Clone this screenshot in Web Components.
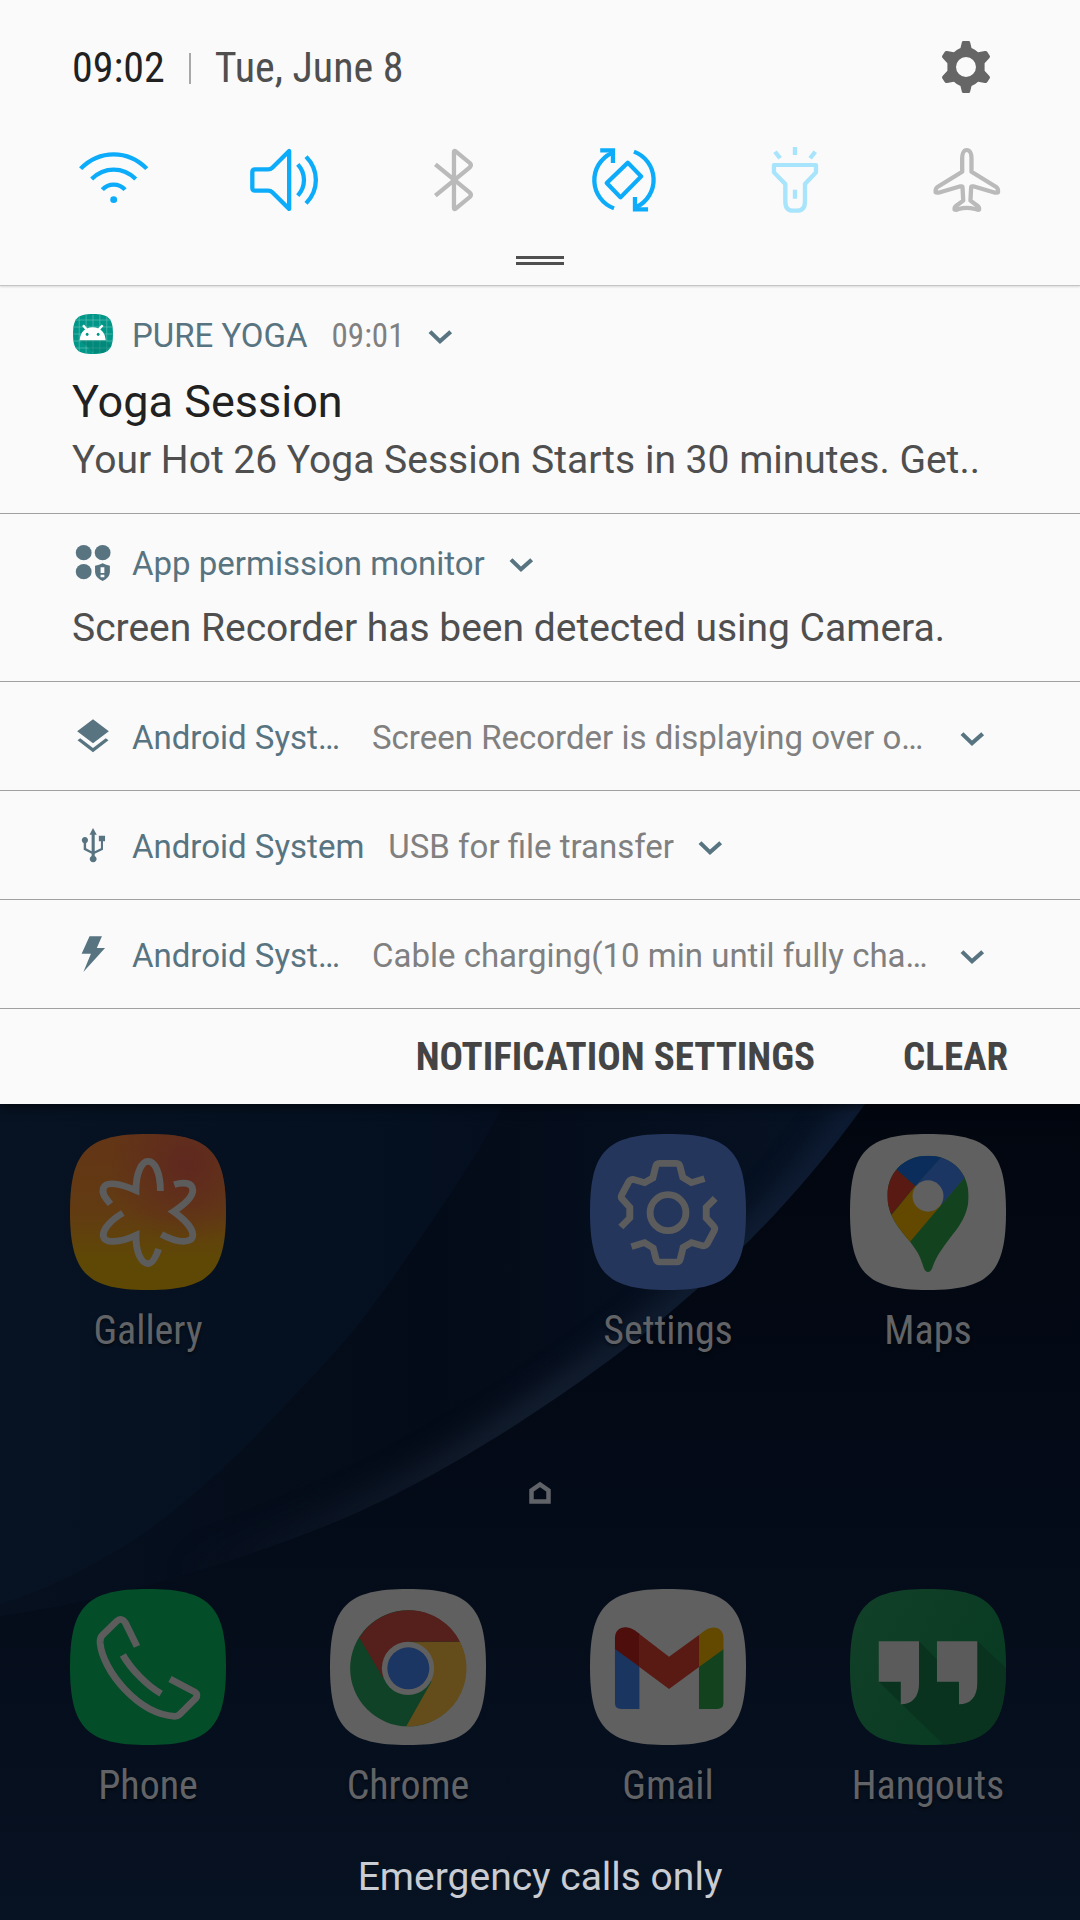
<!DOCTYPE html>
<html lang="en">
<head>
<meta charset="utf-8">
<meta name="viewport" content="width=device-width, initial-scale=1">
<title>Notification shade</title>
<style>
  html, body { margin: 0; min-height: 100vh; background: #050d1b; }
  body {
    display: flex; flex-direction: column;
    font-family: Roboto, "Noto Sans", sans-serif;
    --condensed: "Roboto Condensed", "Liberation Sans Narrow", Roboto, sans-serif;
    --accent: #587481;
  }
</style>
</head>
<body>
<notification-shade>
  <quick-panel slot="panel" time="09:02" date="Tue, June 8">
    <quick-toggle icon="wifi" label="Wi-Fi" state="on"></quick-toggle>
    <quick-toggle icon="sound" label="Sound" state="on"></quick-toggle>
    <quick-toggle icon="bluetooth" label="Bluetooth" state="off"></quick-toggle>
    <quick-toggle icon="rotate" label="Auto rotate" state="on"></quick-toggle>
    <quick-toggle icon="torch" label="Flashlight" state="dim"></quick-toggle>
    <quick-toggle icon="plane" label="Airplane mode" state="off"></quick-toggle>
  </quick-panel>
  <notification-item icon="yoga">
    <span slot="app">PURE YOGA</span>
    <time slot="time">09:01</time>
    <span slot="title">Yoga Session</span>
    <span slot="body">Your Hot 26 Yoga Session Starts in 30 minutes. Get..</span>
  </notification-item>
  <notification-item icon="permission">
    <span slot="app">App permission monitor</span>
    <span slot="body">Screen Recorder has been detected using Camera.</span>
  </notification-item>
  <notification-item compact full icon="layers">
    <span slot="app">Android Syst…</span>
    <span slot="summary">Screen Recorder is displaying over o…</span>
  </notification-item>
  <notification-item compact icon="usb">
    <span slot="app">Android System</span>
    <span slot="summary">USB for file transfer</span>
  </notification-item>
  <notification-item compact full icon="bolt">
    <span slot="app">Android Syst…</span>
    <span slot="summary">Cable charging(10 min until fully cha…</span>
  </notification-item>
  <shade-action slot="actions">NOTIFICATION SETTINGS</shade-action>
  <shade-action slot="actions">CLEAR</shade-action>
</notification-shade>
<home-screen>
  <app-tile icon="gallery" column="1">Gallery</app-tile>
  <app-tile icon="settings" column="3">Settings</app-tile>
  <app-tile icon="maps" column="4">Maps</app-tile>
  <app-tile slot="dock" icon="phone">Phone</app-tile>
  <app-tile slot="dock" icon="chrome">Chrome</app-tile>
  <app-tile slot="dock" icon="gmail">Gmail</app-tile>
  <app-tile slot="dock" icon="hangouts">Hangouts</app-tile>
  <span slot="carrier">Emergency calls only</span>
</home-screen>

<script>
const SQUIRCLE = 'M0-78C61-78 78-61 78 0S61 78 0 78-78 61-78 0-61-78 0-78Z';

/* Each glyph is drawn on a fine grid whose middle is (cx, cy). */
function glyph(size, cx, cy, body, attrs = '', under = '') {
  const h = size / 2;
  return `<svg viewBox="${-h} ${-h} ${size} ${size}" width="${size}" height="${size}" aria-hidden="true">${under}<g transform="scale(.3444 .3333) translate(${-cx} ${-cy})" ${attrs}>${body}</g></svg>`;
}
const LINE = 'fill="none" stroke="currentColor" stroke-width="12.5" stroke-linejoin="round"';
const SOFT = 'fill="none" stroke="#5c5c5c" stroke-width="20"';
const plate = fill => `<path d="${SQUIRCLE}" fill="${fill}"/>`;

const ICONS = {
  wifi: glyph(72, 329, 540, `<path d="M235 506C262 478 296 463 331 463S400 478 427 506M267 537C285 519 307 509 331 509S377 519 395 537M298 569C307 559 318 554 331 554S355 559 364 569"/><circle cx="331" cy="599" r="10" fill="currentColor" stroke="none"/>`, LINE),
  sound: glyph(72, 824, 540, `<path d="M839 453V627L790 577Q785 572 778 572H740Q732 572 732 564V516Q732 508 740 508H778Q785 508 790 503ZM864 493C888 520 888 560 864 587M888 470C926 510 926 570 888 610"/>`, LINE),
  bluetooth: glyph(72, 1321, 540, `<path d="M1264 587L1364 502Q1370 495 1364 489L1323 454Q1318 450 1318 456V624Q1318 630 1323 626L1364 591Q1370 585 1364 578L1264 493"/>`, LINE),
  rotate: glyph(72, 247, 540, `<path d="M215 625A87 90 0 0 1 208 459M273 455A87 90 0 0 1 280 621"/><path d="M175 451H212V489M314 628H276V591" stroke-linejoin="miter"/><path d="M255 488L294 529 234 592 194 549Z"/>`, LINE),
  torch: glyph(72, 743, 540, `<path d="M679 495H801V517L769 552V605Q769 632 745 632H735Q712 632 712 605V552L679 517ZM740 441V465M682 455L697 475M799 455L784 475M740 569V596"/>`, LINE),
  plane: glyph(72, 1239, 540, `<path d="M1238 450C1228 450 1225 465 1225 475V515L1152 562Q1147 566 1148 577 1150 579 1156 578L1220 559Q1226 558 1226 562L1228 602 1207 618Q1202 622 1203 629 1208 631 1215 627 1238 620 1262 627 1270 631 1274 629 1275 622 1270 618L1249 602 1251 562Q1251 558 1257 559L1321 578Q1328 579 1329 577 1330 566 1325 562L1252 515V475C1252 465 1249 450 1238 450Z"/>`, LINE),
  gear: glyph(56, 1237, 201, `<path fill-rule="evenodd" d="M1229 120H1245Q1248 120 1249 124L1253 141Q1263 145 1272 154L1292 150Q1297 149 1299 153L1306 164Q1308 167 1305 171L1291 187V209L1305 225Q1308 229 1306 232L1299 243Q1297 247 1292 246L1272 242Q1263 251 1253 255L1249 272Q1248 276 1245 276H1229Q1226 276 1225 272L1221 255Q1211 251 1202 242L1182 246Q1177 247 1175 243L1168 232Q1166 229 1169 225L1183 209V187L1169 171Q1166 167 1168 164L1175 153Q1177 149 1182 150L1202 154Q1211 145 1221 141L1225 124Q1226 120 1229 120ZM1208 198A29 30 0 1 0 1266 198 29 30 0 1 0 1208 198Z"/>`, 'fill="#666"'),
  chevron: glyph(40, 1277, 136, `<path d="M1248 123L1277 152 1308 123"/>`, 'fill="none" stroke="currentColor" stroke-width="12"'),

  yoga: glyph(42, 270, 135, `<path transform="translate(270 129) scale(.743 .768)" d="${SQUIRCLE}" fill="#009688"/><g stroke="#5fbfb2" stroke-width="2"><path d="M230 76V182M250 71V187M270 71V187M290 71V187M310 76V182M220 87H320M214 108H326M213 129H327M214 150H326M220 171H320"/></g><path d="M232 148H306L324 164 300 186H272Z" fill="#00796b" opacity=".5"/><path d="M251 115L241 103M287 115L298 103" stroke="#fff" stroke-width="7" fill="none"/><path d="M231 148Q235 110 269 109 303 110 307 148Z" fill="#fff"/><ellipse cx="253" cy="130" rx="4" ry="5" fill="#009688"/><ellipse cx="285" cy="130" rx="4" ry="5" fill="#009688"/>`),
  permission: glyph(42, 270, 821, `<circle cx="243" cy="787" r="23"/><circle cx="298" cy="787" r="23"/><circle cx="243" cy="844" r="23"/><path fill-rule="evenodd" d="M276 826Q288 825 298 819 308 825 319 826V846Q318 863 298 872 277 863 276 846ZM292 831V848H303V831ZM292 853V861H303V853Z"/>`, 'fill="currentColor"'),
  layers: glyph(42, 270, 172, `<path d="M270 116L316 152 270 188 224 152ZM225 179L233 173 270 202 307 173 315 179 270 215Z"/>`, 'fill="currentColor"'),
  usb: glyph(42, 270, 501, `<path d="M270 444L281 464H275V514L293 505V484H287V467H305V484H299V509L275 521V528A10 10 0 1 1 266 528V521L243 509V490A9 10 0 1 1 250 490V505L266 514V464H260Z"/>`, 'fill="currentColor"'),
  bolt: glyph(42, 270, 827, `<path d="M260 768H296L281 803H305L242 875 264 820H237Z"/>`, 'fill="currentColor"'),
  home: `<svg viewBox="0 0 24 24" width="24" height="24" aria-hidden="true"><path d="M3.500 20.500V9.500L12 3.500 20.500 9.500V20.500Z" fill="none" stroke="#606368" stroke-width="4.500"/></svg>`,

  gallery: glyph(156, 430, 333, `<path d="M321 309C304 288 295 276 301 260 309 239 352 249 395 268 395 215 412 181 430 181 450 181 466 215 466 270M506 251C530 243 560 243 560 268 560 285 540 308 504 332 540 358 560 385 560 402 560 428 518 428 469 400M461 444C452 470 442 488 430 488 412 488 394 455 395 403 350 425 300 430 300 402 300 385 320 358 357 336"/>`, SOFT, `<defs><linearGradient id="g1" x1="0" y1="0" x2="0" y2="1"><stop offset="0" stop-color="#633516"/><stop offset=".5" stop-color="#623b12"/><stop offset=".8" stop-color="#5f4806"/><stop offset="1" stop-color="#5e4804"/></linearGradient><radialGradient id="g2" cx=".75" cy=".2" r=".5"><stop offset="0" stop-color="#5f2820"/><stop offset="1" stop-color="#5f2820" stop-opacity="0"/></radialGradient></defs>` + plate('url(#g1)') + plate('url(#g2)')),
  settings: glyph(156, 372, 334, `<ellipse cx="372" cy="336" rx="52" ry="54"/><path d="M478 234L440 246 415 230 407 198Q405 188 396 188H347Q338 188 336 198L328 232 304 246 270 236Q263 236 258 243L238 282Q234 290 240 296L261 320V352L235 379M266 438L304 426 329 442 337 474Q339 484 348 484H397Q406 484 408 474L416 440 440 426 474 436Q481 436 486 429L506 390Q510 382 504 376L483 352V320L509 293"/>`, SOFT, plate('#25365d')),
  maps: glyph(156, 1127, 334, `<defs><clipPath id="pin"><path d="M1127 165C1200 165 1245 220 1245 285 1245 345 1215 380 1185 420 1160 455 1150 470 1139 503Q1135 514 1127 514T1115 503C1104 465 1098 455 1075 423 1045 385 1009 345 1009 285 1009 220 1054 165 1127 165Z"/></clipPath></defs><g clip-path="url(#pin)"><path fill="#13421f" d="M1000 150H1260V530H1000Z"/><path fill="#634900" d="M1270 186L1075 423 960 420 1090 255Z"/><path fill="#1c3663" d="M1240 150V223L1165 314 1090 255 1180 152Z"/><path fill="#5a1a14" d="M1020 193L1090 255 1012 353 990 340V200Z"/><path fill="#0a2d5c" d="M1025 197L1090 255 1182 150H1040Z"/></g><ellipse cx="1127" cy="286" rx="45" ry="47" fill="#606060"/>`, '', plate('#606060')),
  phone: glyph(156, 430, 320, `<path d="M398 258L365 189Q355 170 340 182L297 225Q290 232 291 248C298 330 400 460 508 468Q516 468 522 462L568 415Q577 403 566 395L494 356M357 284C380 325 425 375 468 400"/>`, SOFT, plate('#034d29')),
  chrome: glyph(156, 1184, 320, `<ellipse cx="1184" cy="324" rx="168" ry="174" fill="#0f4226"/><path d="M1184 246L1335 244A168 174 0 0 1 1179 498L1252 364Z" fill="#654d1b"/><path d="M1043 232A168 174 0 0 1 1335 244H1184L1110 350Z" fill="#551f1b"/><ellipse cx="1184" cy="324" rx="76" ry="80" fill="#606060"/><ellipse cx="1185" cy="324" rx="61" ry="63" fill="#1c3663"/>`, '', plate('#606060')),
  gmail: glyph(156, 372, 320, `<path fill="#1b3561" d="M218 264L289 318V446H236Q218 446 218 428Z"/><path fill="#13421f" d="M462 318L533 265V428Q533 446 515 446H462Z"/><path fill="#4d0e0c" d="M218 266V233C218 200 250 192 275 210L290 221V320Z"/><path fill="#5a1a14" d="M289 221L375 289 462 224V320L375 386 289 320Z"/><path fill="#634900" d="M462 224L480 210C505 192 533 203 533 233V267L462 320Z"/>`, '', plate('#606060')),
  hangouts: glyph(156, 1127, 320, `<defs><clipPath id="hp"><path transform="translate(1127 320) scale(2.904 3)" d="${SQUIRCLE}"/></clipPath></defs><path clip-path="url(#hp)" fill="#09331f" d="M984 364L1180 560H1360V330L1271 243V364H1153V298L1101 243V364Z"/><path fill="#5b5b5b" d="M984 243H1101V370C1101 410 1080 432 1048 432V364H984ZM1153 243H1270V370C1270 410 1249 432 1217 432V364H1153Z"/>`, '', `<defs><linearGradient id="hg" x1="0" y1="0" x2="1" y2=".6"><stop offset="0" stop-color="#124028"/><stop offset="1" stop-color="#083b22"/></linearGradient></defs>` + plate('url(#hg)')),
};

function define(name, html, ready) {
  const template = document.createElement('template');
  template.innerHTML = html;
  customElements.define(name, class extends HTMLElement {
    connectedCallback() {
      if (this.shadowRoot) return;
      const root = this.attachShadow({ mode: 'open' });
      root.append(template.content.cloneNode(true));
      if (ready) ready(this, root);
    }
  });
}

define('ui-icon', `
  <style>:host { display: block; flex: none; } svg { display: block; overflow: visible; }</style>
  <span></span>`, (host, root) => {
  root.querySelector('span').innerHTML = ICONS[host.getAttribute('name')] || '';
});

define('quick-toggle', `
  <style>
    :host { display: flex; justify-content: center; color: #bababa; }
    :host([state="on"]) { color: #0cacfb; }
    :host([state="dim"]) { color: #a8e4fb; }
    button { all: unset; display: block; cursor: pointer; }
  </style>
  <button type="button"></button>`, (host, root) => {
  const b = root.querySelector('button');
  b.setAttribute('aria-label', host.getAttribute('label'));
  b.innerHTML = `<ui-icon name="${host.getAttribute('icon')}"></ui-icon>`;
});

define('quick-panel', `
  <style>
    :host { display: flex; flex-direction: column; padding-top: 40px; border-bottom: 1px solid #c4c4c4; box-shadow: 0 1px 2px #0002; }
    header { display: flex; align-items: center; height: 56px; padding: 0 86px 0 72px; font-family: var(--condensed); font-size: 42px; line-height: 56px; }
    .time { color: #212121; }
    .rule { width: 2px; height: 31px; margin: 0 24px; background: #a8a8a8; }
    .date { flex: 1; color: #4f4f4f; }
    button { all: unset; cursor: pointer; }
    .toggles { display: grid; grid-template-columns: repeat(6, 1fr); padding: 48px 28px 40px; }
    .handle { align-self: center; width: 48px; height: 3px; border: solid #4f4f4f; border-width: 3px 0; margin-bottom: 20px; }
  </style>
  <header>
    <time class="time"></time><span class="rule"></span><span class="date"></span>
    <button type="button" aria-label="Settings"><ui-icon name="gear"></ui-icon></button>
  </header>
  <div class="toggles"><slot></slot></div>
  <div class="handle"></div>`, (host, root) => {
  root.querySelector('.time').textContent = host.getAttribute('time');
  root.querySelector('.date').textContent = host.getAttribute('date');
});

define('notification-item', `
  <style>
    :host { display: block; padding: 26px 72px 25px; border-bottom: 1px solid #a0a0a0; }
    :host([compact]) { padding: 32px 88px 28px 72px; }
    .head { display: flex; align-items: center; height: 48px; font-size: 33px; line-height: 48px; color: var(--accent); white-space: nowrap; }
    ui-icon { margin-right: 18px; }
    :host([full]) .app { min-width: 216px; }
    :host([full]) .summary { flex: 1; }
    .time, .summary { color: #808080; }
    .time { font-family: var(--condensed); }
    ::slotted([slot="time"]), ::slotted([slot="summary"]) { margin-left: 24px; }
    button { all: unset; cursor: pointer; margin-left: 16px; }
    button ui-icon { margin: 0; }
    .text { display: flex; flex-direction: column; margin-top: 12px; white-space: nowrap; }
    :host([compact]) .text { display: none; }
    ::slotted([slot="title"]) { font-size: 45px; line-height: 60px; color: #212121; }
    ::slotted([slot="body"]) { font-size: 39px; line-height: 56px; color: #4f4f4f; }
  </style>
  <div class="head">
    <ui-icon class="icon"></ui-icon>
    <span class="app"><slot name="app"></slot></span>
    <span class="time"><slot name="time"></slot></span>
    <span class="summary"><slot name="summary"></slot></span>
    <button type="button" aria-label="Expand"><ui-icon name="chevron"></ui-icon></button>
  </div>
  <div class="text"><slot name="title"></slot><slot name="body"></slot></div>`, (host, root) => {
  const icon = document.createElement('ui-icon');
  icon.setAttribute('name', host.getAttribute('icon'));
  root.querySelector('.icon').replaceWith(icon);
});

define('shade-action', `
  <style>
    :host { display: block; }
    button { all: unset; cursor: pointer; font: 700 39px/56px var(--condensed); color: #444; white-space: nowrap; }
  </style>
  <button type="button"><slot></slot></button>`);

define('notification-shade', `
  <style>
    :host { display: block; background: #fafafa; position: relative; box-shadow: 0 2px 10px #000a; z-index: 1; }
    footer { display: flex; justify-content: flex-end; align-items: center; gap: 88px; height: 95px; padding: 0 72px; }
  </style>
  <slot name="panel"></slot>
  <slot></slot>
  <footer><slot name="actions"></slot></footer>`);

define('app-tile', `
  <style>
    :host { display: block; }
    a { display: flex; flex-direction: column; align-items: center; gap: 17px; color: #616366; text-decoration: none; font: 40px/48px var(--condensed); text-shadow: 0 2px 3px #0008; }
  </style>
  <a href="#"><ui-icon></ui-icon><span><slot></slot></span></a>`, (host, root) => {
  if (host.hasAttribute('column')) host.style.gridColumn = host.getAttribute('column');
  const icon = document.createElement('ui-icon');
  icon.setAttribute('name', host.getAttribute('icon'));
  root.querySelector('ui-icon').replaceWith(icon);
});

define('home-screen', `
  <style>
    :host { display: flex; flex: 1; flex-direction: column; position: relative; isolation: isolate; overflow: hidden; padding: 30px 0 19px; }
    .wallpaper { position: absolute; inset: 0; width: 100%; height: 100%; z-index: -1; }
    .grid { display: grid; grid-template-columns: repeat(4, 1fr); padding: 0 22px 0 18px; }
    .page { align-self: center; margin: 126px 0 84px; }
    .carrier { margin-top: 43px; text-align: center; font-size: 39px; line-height: 48px; color: #c9ccd2; }
  </style>
  <svg class="wallpaper" viewBox="0 0 1080 816" preserveAspectRatio="none" aria-hidden="true">
    <defs>
      <linearGradient id="base" x1="0" y1="0" x2="0" y2="1"><stop offset="0" stop-color="#02060f"/><stop offset=".5" stop-color="#040b18"/><stop offset="1" stop-color="#071222"/></linearGradient>
      <linearGradient id="mid" x1="0" y1="0" x2="1" y2="0"><stop offset="0" stop-color="#06101f"/><stop offset=".5" stop-color="#040b18"/><stop offset="1" stop-color="#061224"/></linearGradient>
      <linearGradient id="left" x1="0" y1="0" x2="1" y2="0"><stop offset="0" stop-color="#071222"/><stop offset=".5" stop-color="#051120"/><stop offset="1" stop-color="#040e1f"/></linearGradient>
      <linearGradient id="glow" gradientUnits="userSpaceOnUse" x1="180" y1="0" x2="865" y2="0"><stop offset="0" stop-color="#131e2e" stop-opacity="0"/><stop offset=".5" stop-color="#131e2e"/><stop offset="1" stop-color="#0e1c34"/></linearGradient>
      <clipPath id="in"><path d="M865 0C800 90 740 148 697 185 600 272 450 370 340 416 230 462 100 498 0 512V0Z"/></clipPath>
      <filter id="soft" x="-20%" y="-20%" width="140%" height="140%" color-interpolation-filters="sRGB"><feGaussianBlur stdDeviation="12"/></filter>
    </defs>
    <path d="M0 0H1080V816H0Z" fill="url(#base)"/>
    <g clip-path="url(#in)">
      <path d="M0 0H870V520H0Z" fill="url(#mid)"/>
      <path d="M880-20C800 90 740 148 697 185 600 272 450 370 340 416 230 462 100 498 0 516" fill="none" stroke="url(#glow)" stroke-width="34" filter="url(#soft)"/>
      <path d="M504 0C470 65 430 120 396 169 360 222 330 255 293 293 240 350 205 382 162 416 110 455 50 485 0 500V0Z" fill="url(#left)"/>
    </g>
  </svg>
  <div class="grid"><slot></slot></div>
  <ui-icon class="page" name="home"></ui-icon>
  <div class="grid"><slot name="dock"></slot></div>
  <div class="carrier"><slot name="carrier"></slot></div>`);
</script>
</body>
</html>
